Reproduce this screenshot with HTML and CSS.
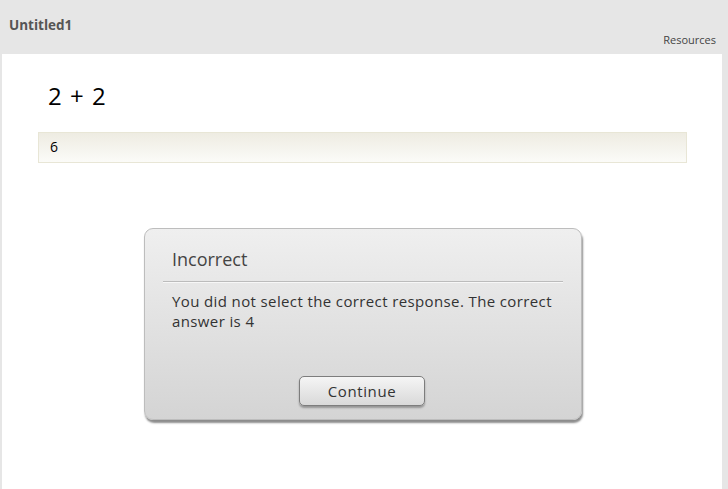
FILE: index.html
```html
<!DOCTYPE html>
<html>
<head>
<meta charset="utf-8">
<link rel="stylesheet" href="styles.css">
</head>
<body>
<div class="app">
  <header class="topbar">
    <div class="title">Untitled1</div>
    <div class="resources">Resources</div>
  </header>
  <main class="content">
    <div class="question">2 + 2</div>
    <div class="answer">6</div>
    <div class="dialog">
      <div class="dialog-title">Incorrect</div>
      <div class="dialog-body">You did not select the correct response. The correct answer is 4</div>
      <div class="dialog-actions"><button class="btn">Continue</button></div>
    </div>
  </main>
</div>
</body>
</html>
```
FILE: styles.css
```css
html, body { margin: 0; padding: 0; }
body {
  width: 728px; height: 489px; overflow: hidden;
  background: #e6e6e6;
  font-family: "Open Sans", "Noto Sans", sans-serif;
}
.app { display: flex; flex-direction: column; height: 489px; }
.topbar {
  height: 54px; display: flex; justify-content: space-between;
  box-sizing: border-box; padding: 0 12px 0 9px;
}
.title {
  font-weight: bold; font-size: 13.5px; color: #555; padding-top: 16px;
}
.resources {
  font-size: 11px; color: #444; padding-top: 32px;
}
.content {
  flex: 1; background: #fff; margin: 0 6px 0 2px;
  display: flex; flex-direction: column; position: relative;
}
.question {
  font-size: 24px; color: #000; margin: 26px 0 0 46px; line-height: 32px;
  word-spacing: 2px;
}
.answer {
  margin: 20px 0 0 36px; width: 649px; height: 31px; box-sizing: border-box;
  border: 1px solid #e8e6d6;
  background: linear-gradient(#eeece2, #fbfbf8);
  font-size: 14px; color: #000; padding-left: 11px; line-height: 28px;
}
.dialog {
  margin: 65px 0 0 142px; width: 438px; height: 192px; box-sizing: border-box;
  border: 1px solid #bdbdbd; border-radius: 9px;
  background: linear-gradient(#efefef, #d4d4d4);
  box-shadow: 1px 3px 2px rgba(0,0,0,0.45);
  padding: 0 18px; display: flex; flex-direction: column;
}
.dialog-title {
  font-size: 18px; color: #444; padding: 17px 0 0 9px; line-height: 26px;
  height: 35px; border-bottom: 1px solid #bcbcbc;
  box-shadow: 0 1px 0 #f7f7f7;
}
.dialog-body {
  font-size: 15px; letter-spacing: 0.38px; color: #333; line-height: 20px;
  padding: 9px 0 0 9px;
}
.dialog-actions { display: flex; justify-content: center; margin-top: 45px; }
.btn {
  width: 126px; height: 30px; border: 1px solid #7d7d7d; border-radius: 5px;
  background: linear-gradient(#f5f5f5, #d9d9d9);
  box-shadow: 0 2px 2px rgba(0,0,0,0.3);
  font-family: inherit; font-size: 15px; letter-spacing: 0.6px; color: #333; padding: 0;
  margin-right: 2px;
}
```
